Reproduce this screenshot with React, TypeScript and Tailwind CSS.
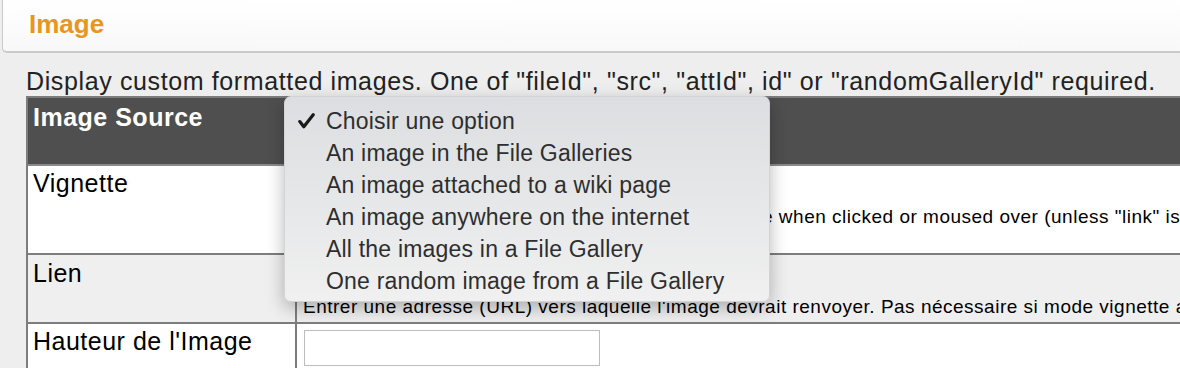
import React from "react";

const options = [
  "Choisir une option",
  "An image in the File Galleries",
  "An image attached to a wiki page",
  "An image anywhere on the internet",
  "All the images in a File Gallery",
  "One random image from a File Gallery",
];

function SelectMenu() {
  return (
    <div className="absolute left-[284px] top-[96px] w-[486px] h-[206px] rounded-[7px] bg-gradient-to-b from-[#dcdee1] to-[#f0f0f0] shadow-[0_6px_18px_rgba(0,0,0,0.28)] border border-[#d2d3d5] pt-[8px] font-['Liberation_Sans',Arial,sans-serif] text-[23px] tracking-[0.2px] text-[#2e2e2e]">
      {options.map((label, i) => (
        <div key={label} className="h-[32px] flex items-center">
          <span className="w-[41px] flex justify-center pl-[2px]">
            {i === 0 && (
              <svg width="17" height="16" viewBox="0 0 17 16">
                <path d="M1.8 8.6 L5.8 13.8 L15.2 1.8" fill="none" stroke="#1a1a1a" strokeWidth="3.2" strokeLinecap="round" strokeLinejoin="round" />
              </svg>
            )}
          </span>
          <span>{label}</span>
        </div>
      ))}
    </div>
  );
}

export default function App() {
  return (
    <div className="relative w-[1180px] h-[368px] overflow-hidden bg-[#eeeeee] font-['Liberation_Sans',Arial,sans-serif] text-black">
      <div className="ml-[2px] h-[53px] bg-gradient-to-b from-white to-[#f8f8f8] border-l border-b-2 border-[#cacaca] rounded-bl-[5px] pl-[26px] pt-[7px]">
        <h1 className="text-[26px] font-bold text-[#e8961c] leading-[34px]">Image</h1>
      </div>

      <p className="pl-[26px] mt-[13px] text-[25px] leading-[30px] text-[#222] whitespace-nowrap tracking-[0.62px]">
        Display custom formatted images. One of "fileId", "src", "attId", id" or "randomGalleryId" required.
      </p>

      <div className="ml-[26px] w-[1200px] border-2 border-[#7d7d7d] text-[25px] leading-[30px] tracking-[0.5px]">
        <div className="flex h-[68px] bg-[#4f4f4f] border-b-2 border-[#8a8a8a]">
          <div className="w-[269px] shrink-0 pl-[5px] pt-[4px] font-bold text-white">Image Source</div>
          <div className="flex-1" />
        </div>

        <div className="flex h-[89px] bg-white border-b-2 border-[#7d7d7d]">
          <div className="w-[269px] shrink-0 pl-[5px] pt-[2px] border-r-2 border-[#7d7d7d]">Vignette</div>
          <div className="flex-1 min-w-0 overflow-hidden pl-[6px] pt-[40px] text-[19px] leading-[22px] tracking-[0.5px] whitespace-nowrap">
            Make the image a thumbnail that enlarges to full size when clicked or moused over (unless "link" is set to another target).
          </div>
        </div>

        <div className="flex h-[69px] bg-[#efefef] border-b-2 border-[#7d7d7d]">
          <div className="w-[269px] shrink-0 pl-[5px] pt-[3px] border-r-2 border-[#7d7d7d]">Lien</div>
          <div className="flex-1 min-w-0 overflow-hidden pl-[6px] pt-[41px] text-[19px] leading-[22px] tracking-[0.5px] whitespace-nowrap">
            Entrer une adresse (URL) vers laquelle l'image devrait renvoyer. Pas nécessaire si mode vignette activé.
          </div>
        </div>

        <div className="flex h-[60px] bg-white">
          <div className="w-[269px] shrink-0 pl-[5px] pt-[2px] border-r-2 border-[#7d7d7d]">Hauteur de l'Image</div>
          <div className="flex-1 pl-[7px] pt-[6px]">
            <div className="w-[296px] h-[36px] border border-[#bdbdbd] bg-white" />
          </div>
        </div>
      </div>

      <SelectMenu />
    </div>
  );
}
